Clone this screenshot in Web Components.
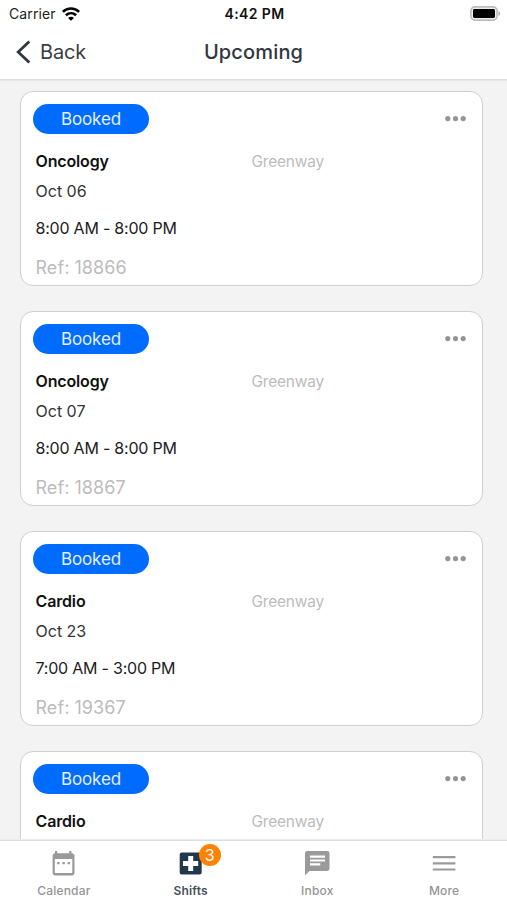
<!DOCTYPE html>
<html lang="en">
<head>
<meta charset="utf-8">
<title>Upcoming</title>
<style>
  body {
    margin: 0;
    font-family: Inter, "Liberation Sans", sans-serif;
    color: #1c1c1e;
  }
</style>
</head>
<body>
<shift-app>
  <status-bar slot="top" carrier="Carrier" time="4:42 PM"></status-bar>
  <nav-header slot="top" back="Back">Upcoming</nav-header>

  <shift-card status="Booked">
    <span slot="unit">Oncology</span>
    <span slot="place">Greenway</span>
    <span slot="date">Oct 06</span>
    <span slot="time">8:00 AM - 8:00 PM</span>
    <span slot="ref">Ref: 18866</span>
  </shift-card>
  <shift-card status="Booked">
    <span slot="unit">Oncology</span>
    <span slot="place">Greenway</span>
    <span slot="date">Oct 07</span>
    <span slot="time">8:00 AM - 8:00 PM</span>
    <span slot="ref">Ref: 18867</span>
  </shift-card>
  <shift-card status="Booked">
    <span slot="unit">Cardio</span>
    <span slot="place">Greenway</span>
    <span slot="date">Oct 23</span>
    <span slot="time">7:00 AM - 3:00 PM</span>
    <span slot="ref">Ref: 19367</span>
  </shift-card>
  <shift-card status="Booked">
    <span slot="unit">Cardio</span>
    <span slot="place">Greenway</span>
  </shift-card>

  <tab-bar slot="bottom">
    <tab-item icon="calendar">Calendar</tab-item>
    <tab-item icon="shifts" badge="3" active>Shifts</tab-item>
    <tab-item icon="inbox">Inbox</tab-item>
    <tab-item icon="more">More</tab-item>
  </tab-bar>
</shift-app>

<script>
class ShiftApp extends HTMLElement {
  constructor() {
    super();

    this.attachShadow({mode: 'open'});
  }
  connectedCallback() {
    this.shadowRoot.innerHTML = `
    <style>
      :host {
        display: flex;
        flex-direction: column;
        height: 900px;
        overflow: hidden;
        background: #f3f3f3;
      }
      header {
        flex: none;
        background: #fff;
        border-bottom: 1px solid #dcdcdc;
        box-shadow: 0 1px 1px #e9e9e9;
      }
      main {
        flex: 1;
        min-height: 0;
        overflow: hidden;
        display: flex;
        flex-direction: column;
        gap: 25px;
        padding: 11px 24px 0 20px;
      }
    </style>
    <header><slot name="top"></slot></header>
    <main><slot></slot></main>
    <slot name="bottom"></slot>`;
  }
}

class StatusBar extends HTMLElement {
  constructor() {
    super();

    this.attachShadow({mode: 'open'});
  }
  connectedCallback() {
    this.shadowRoot.innerHTML = `
    <style>
      :host {
        display: grid;
        grid-template-columns: 1fr auto 1fr;
        align-items: center;
        height: 27px;
        padding: 0 6px 0 9px;
        font-size: 14px;
        color: #222;
      }
      .carrier {
        display: flex;
        align-items: center;
        gap: 6px;
        letter-spacing: .1px;
      }
      .time {
        font-weight: 600;
        letter-spacing: .4px;
        margin-right: 1px;
        color: #111;
      }
      .battery {
        justify-self: end;
      }
      svg {
        display: block;
      }
    </style>
    <div class="carrier">
      <span>${this.getAttribute('carrier')}</span>
      <svg width="18" height="14" viewBox="0 0 18 14" fill="none" stroke="#000" stroke-width="2.6">
        <path d="M.9 4.9C5.5.4 12.5.4 17.1 4.9"/>
        <path d="M3.9 8.3c3-2.8 7.2-2.8 10.2 0"/>
        <path d="M9 13.7 6.1 10.9c1.6-1.6 4.2-1.6 5.800 0z" fill="#000" stroke="none"/>
      </svg>
    </div>
    <div class="time">${this.getAttribute('time')}</div>
    <svg class="battery" width="31" height="15" viewBox="0 0 31 15">
      <rect x=".9" y=".9" width="26.2" height="13.2" rx="4" fill="#eee" stroke="#bdbdbd" stroke-width="1.6"/>
      <rect x="3" y="3" width="22" height="9" rx="1.4" fill="#000"/>
      <path d="M28.5 5.2c2.2.8 2.2 3.8 0 4.6z" fill="#aaa"/>
    </svg>`;
  }
}

class NavHeader extends HTMLElement {
  constructor() {
    super();

    this.attachShadow({mode: 'open'});
  }
  connectedCallback() {
    this.shadowRoot.innerHTML = `
    <style>
      :host {
        display: grid;
        grid-template-columns: 1fr auto 1fr;
        align-items: center;
        height: 50px;
        padding: 0 15px 2px;
        font-size: 20px;
        color: #3b3e43;
      }
      .back {
        display: flex;
        align-items: center;
        gap: 9px;
        letter-spacing: -.2px;
      }
      .title {
        font-weight: 550;
        letter-spacing: .15px;
        color: #32373d;
      }
    </style>
    <div class="back">
      <svg width="16" height="24" viewBox="0 0 16 24" fill="none" stroke="#32373d" stroke-width="2.8">
        <path d="M14.3 1.4 3.2 12l11.1 10.6"/>
      </svg>
      <span>${this.getAttribute('back')}</span>
    </div>
    <div class="title"><slot></slot></div>`;
  }
}

class ShiftCard extends HTMLElement {
  constructor() {
    super();

    this.attachShadow({mode: 'open'});
  }
  connectedCallback() {
    this.shadowRoot.innerHTML = `
    <style>
      :host {
        display: block;
        flex: none;
        box-sizing: border-box;
        height: 195px;
        padding: 12px 16px 0 12px;
        background: #fff;
        border: 1px solid #cfcfcf;
        border-radius: 13px;
        font-size: 16px;
        line-height: 20px;
        letter-spacing: -.22px;
      }
      .top {
        display: flex;
        justify-content: space-between;
        align-items: center;
      }
      .status {
        width: 116px;
        border-radius: 15px;
        background: #006cff;
        color: #e4f0ff;
        font-size: 17px;
        line-height: 30px;
        letter-spacing: -.15px;
        text-align: center;
      }
      .row {
        display: grid;
        grid-template-columns: 216px 1fr;
        align-items: end;
        margin: 17px 0 0 2.5px;
      }
      .unit {
        font-weight: 600;
        letter-spacing: -.15px;
        color: #111;
      }
      .place {
        font-size: 15.5px;
        line-height: 19px;
        color: #bcbcbc;
      }
      .date {
        margin: 10px 0 0 2.5px;
        letter-spacing: 0;
        color: #333;
      }
      .time {
        margin: 17px 0 0 2.5px;
      }
      .ref {
        margin: 20px 0 0 2.5px;
        font-size: 18px;
        letter-spacing: .05px;
        color: #bcbcbc;
      }
    </style>
    <div class="top">
      <div class="status">${this.getAttribute('status')}</div>
      <svg width="21" height="6" viewBox="0 0 21 6" fill="#959595">
        <circle cx="2.8" cy="2.6" r="2.6"/>
        <circle cx="10.5" cy="2.6" r="2.6"/>
        <circle cx="18.2" cy="2.6" r="2.6"/>
      </svg>
    </div>
    <div class="row">
      <div class="unit"><slot name="unit"></slot></div>
      <div class="place"><slot name="place"></slot></div>
    </div>
    <div class="date"><slot name="date"></slot></div>
    <div class="time"><slot name="time"></slot></div>
    <div class="ref"><slot name="ref"></slot></div>`;
  }
}

class TabBar extends HTMLElement {
  constructor() {
    super();

    this.attachShadow({mode: 'open'});
  }
  connectedCallback() {
    this.shadowRoot.innerHTML = `
    <style>
      :host {
        display: grid;
        flex: none;
        grid-template-columns: repeat(4, 1fr);
        box-sizing: border-box;
        height: 60px;
        background: #fff;
        border-top: 1px solid #dedede;
        box-shadow: 0 -1px 1px #ececec;
        z-index: 1;
      }
    </style>
    <slot></slot>`;
  }
}

const icons = {
  calendar: `
    <path d="M5 1h2.2v2.2h12V1h2.2v2.2C23.500 3.200 24.500 4.200 24.500 5.600V23a2.400 2.400 0 0 1-2.400 2.400H5A2.400 2.400 0 0 1 2.600 23V5.600C2.600 4.200 3.600 3.200 5 3.200zM4.800 9v13.200c0 .6.300.9.900.9h15.700c.6 0 .9-.3.900-.9V9z" fill-rule="evenodd"/>
    <path d="M7.100 12h2.400v2.300H7.100zM12.400 12h2.400v2.300h-2.400zM17.600 12H20v2.300h-2.400z"/>`,
  shifts: `
    <path d="M4.700 2.500h18a2 2 0 0 1 2 2v18a2 2 0 0 1-2 2h-18a2 2 0 0 1-2-2v-18a2 2 0 0 1 2-2zM11.200 6.100v5H6v4.800h5.200v5h5v-5h5v-4.800h-5v-5z" fill-rule="evenodd"/>`,
  inbox: `
    <path d="M3.300 1h19.900a2.300 2.300 0 0 1 2.300 2.300v15.300a2.300 2.300 0 0 1-2.300 2.300H5.500L1 25.200V3.300A2.300 2.300 0 0 1 3.300 1zM6 5.500v2.200h15V5.500zM6 9.400v2.200h15V9.400zM6 13.300v2.200h10.300v-2.200z" fill-rule="evenodd"/>`,
  more: `
    <path d="M1.800 6h22.600v2.200H1.800zM1.800 12.200h22.600v2.200H1.800zM1.800 18.400h22.600v2.200H1.800z"/>`
};

class TabItem extends HTMLElement {
  constructor() {
    super();

    this.attachShadow({mode: 'open'});
  }
  connectedCallback() {
    const badge = this.getAttribute('badge');

    this.shadowRoot.innerHTML = `
    <style>
      :host {
        display: flex;
        flex-direction: column;
        align-items: center;
        padding-top: 9px;
        font-size: 12px;
        line-height: 16px;
        font-weight: 500;
        letter-spacing: .2px;
        color: #959595;
        --icon: #9a9a9a;
      }
      :host([active]) {
        font-weight: 600;
        color: #45505c;
        --icon: #22384d;
      }
      .icon {
        position: relative;
        height: 27px;
        margin-bottom: 6px;
      }
      .label {
        padding-left: 1px;
      }
      svg {
        display: block;
        fill: var(--icon);
      }
      .badge {
        position: absolute;
        left: 21.5px;
        top: -6px;
        width: 22px;
        height: 22px;
        border-radius: 50%;
        background: #ff8200;
        color: #fff;
        font-size: 16px;
        font-weight: 400;
        line-height: 22px;
        letter-spacing: 0;
        text-align: center;
      }
    </style>
    <div class="icon">
      <svg width="26" height="27" viewBox="0 0 26 27">${icons[this.getAttribute('icon')]}</svg>
      ${badge ? `<span class="badge">${badge}</span>` : ''}
    </div>
    <div class="label"><slot></slot></div>`;
  }
}

customElements.define('shift-app', ShiftApp);
customElements.define('status-bar', StatusBar);
customElements.define('nav-header', NavHeader);
customElements.define('shift-card', ShiftCard);
customElements.define('tab-bar', TabBar);
customElements.define('tab-item', TabItem);
</script>
</body>
</html>
